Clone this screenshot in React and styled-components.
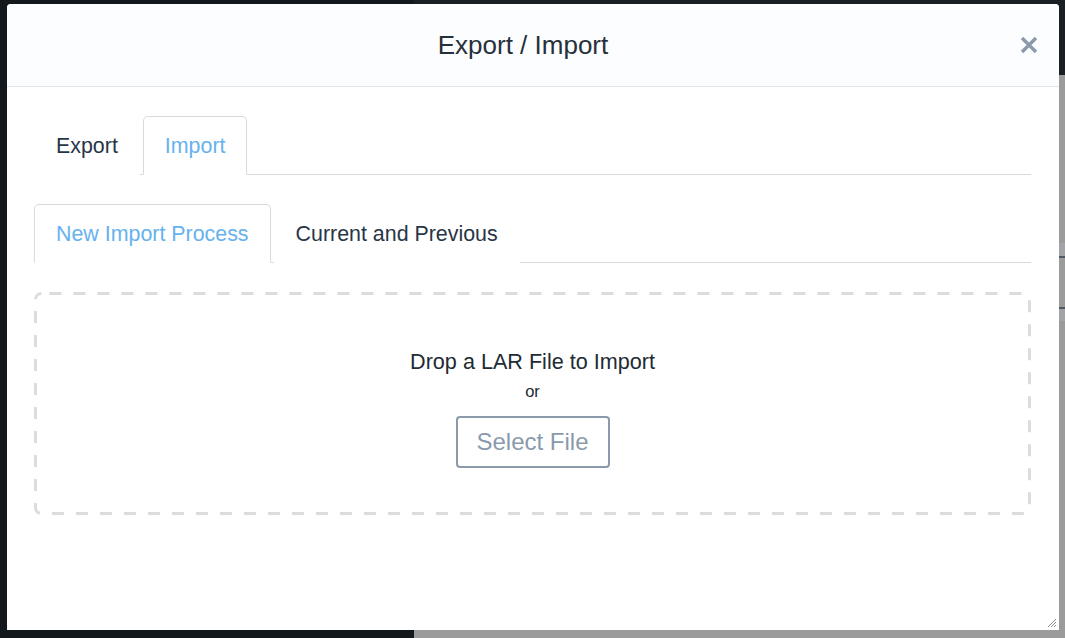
import React, { useState } from "react";
import styled, { createGlobalStyle } from "styled-components";

const Global = createGlobalStyle`
  html, body { margin: 0; padding: 0; }
  body { font-family: "Liberation Sans", Arial, sans-serif; overflow: hidden; }
  * { box-sizing: border-box; }
`;

const Page = styled.div`
  position: relative;
  width: 1065px;
  height: 638px;
  display: flex;
  background: #13181d;
  overflow: hidden;
`;

const Sidebar = styled.div`
  width: 414px;
  background: #13181d;
`;

const Main = styled.div`
  flex: 1;
  display: flex;
  flex-direction: column;
`;

const Topbar = styled.div`
  height: 75px;
  background: #1a1f26;
`;

const Content = styled.div`
  flex: 1;
  background: #9b9b9b;
  display: flex;
  flex-direction: column;
  padding-top: 168px;
`;

const RowLine = styled.div`
  height: ${(p) => p.$h}px;
  background: ${(p) => p.$c};
  margin-bottom: ${(p) => p.$mb || 0}px;
`;

const Modal = styled.div`
  position: absolute;
  left: 7px;
  top: 4px;
  width: 1052px;
  height: 626px;
  background: #ffffff;
  border-radius: 4px 4px 0 0;
  display: flex;
  flex-direction: column;
`;

const Header = styled.div`
  position: relative;
  height: 83px;
  background: #fcfdfe;
  border-bottom: 1px solid #e3e5e7;
  border-radius: 4px 4px 0 0;
  display: flex;
  align-items: center;
  justify-content: center;
  padding-right: 20px;
`;

const Title = styled.h2`
  margin: 0;
  font-weight: 400;
  font-size: 26px;
  color: #26303b;
`;

const Close = styled.button`
  position: absolute;
  right: 17px;
  top: 28px;
  width: 26px;
  height: 26px;
  padding: 0;
  border: 0;
  background: transparent;
  display: flex;
  align-items: center;
  justify-content: center;
  cursor: pointer;
`;

const Body = styled.div`
  flex: 1;
  padding: 28px 28px 0 27px;
  display: flex;
  flex-direction: column;
`;

const TabBar = styled.div`
  display: flex;
  gap: 3px;
  border-bottom: 1px solid #dadada;
  height: ${(p) => p.$h}px;
  margin-bottom: ${(p) => p.$mb}px;
  align-items: flex-end;
`;

const Tab = styled.div`
  height: 59px;
  padding: 1px 21px 0;
  display: flex;
  align-items: center;
  font-size: 21.4px;
  color: ${(p) => (p.$active ? "#67b2ee" : "#273646")};
  border: 1px solid ${(p) => (p.$active ? "#dadada" : "transparent")};
  border-bottom: 1px solid ${(p) => (p.$active ? "#ffffff" : "transparent")};
  border-radius: 5px 5px 0 0;
  margin-bottom: -1px;
  background: #fff;
  cursor: pointer;
`;

const Drop = styled.div`
  position: relative;
  height: 223px;
  border-radius: 6px;
  display: flex;
  flex-direction: column;
  align-items: center;
  padding-top: 53px;
`;

const DashFrame = styled.svg`
  position: absolute;
  inset: 0;
  width: 100%;
  height: 100%;
  pointer-events: none;
  overflow: visible;
`;

const DropText = styled.div`
  font-size: 21.6px;
  line-height: 33px;
  color: #222b33;
`;

const Or = styled.div`
  font-size: 16.5px;
  line-height: 26px;
  color: #222b33;
`;

const SelectBtn = styled.button`
  margin-top: 12px;
  height: 52px;
  width: 154px;
  border: 2px solid #8a9aab;
  border-radius: 4px;
  background: #fff;
  color: #8a9aab;
  font-family: "Liberation Sans", Arial, sans-serif;
  font-size: 24px;
  cursor: pointer;
`;

const Resize = styled.svg`
  position: absolute;
  right: 2px;
  bottom: 2px;
`;

export default function App() {
  const [outer, setOuter] = useState("import");
  const [inner, setInner] = useState("new");
  return (
    <>
      <Global />
      <Page>
        <Sidebar />
        <Main>
          <Topbar />
          <Content>
            <RowLine $h={13} $c="#a2a4a7" />
            <RowLine $h={2} $c="#4d5864" $mb={49} />
            <RowLine $h={2} $c="#4d5864" />
            <RowLine $h={12} $c="#a2a4a7" />
          </Content>
        </Main>
        <Modal>
          <Header>
            <Title>Export / Import</Title>
            <Close aria-label="Close">
              <svg width="20" height="20" viewBox="0 0 20 20">
                <path d="M3 3 L17 17 M17 3 L3 17" stroke="#8a9aab" strokeWidth="3.4" strokeLinecap="butt" />
              </svg>
            </Close>
          </Header>
          <Body>
            <TabBar $h={60} $mb={28}>
              <Tab $active={outer === "export"} onClick={() => setOuter("export")}>Export</Tab>
              <Tab $active={outer === "import"} onClick={() => setOuter("import")}>Import</Tab>
            </TabBar>
            <TabBar $h={60} $mb={29}>
              <Tab $active={inner === "new"} onClick={() => setInner("new")}>New Import Process</Tab>
              <Tab $active={inner === "cur"} onClick={() => setInner("cur")}>Current and Previous</Tab>
            </TabBar>
            <Drop>
              <DashFrame>
                <rect
                  x="1.5"
                  y="1.5"
                  width="calc(100% - 3px)"
                  height="calc(100% - 3px)"
                  rx="6"
                  fill="none"
                  stroke="#dcdcdc"
                  strokeWidth="3"
                  strokeDasharray="12 12"
                  strokeDashoffset="-8"
                />
              </DashFrame>
              <DropText>Drop a LAR File to Import</DropText>
              <Or>or</Or>
              <SelectBtn>Select File</SelectBtn>
            </Drop>
          </Body>
          <Resize width="10" height="10" viewBox="0 0 10 10">
            <path d="M9 1 L1 9 M9 4 L4 9 M9 7 L7 9" stroke="#8c8c8c" strokeWidth="1" />
          </Resize>
        </Modal>
      </Page>
    </>
  );
}
